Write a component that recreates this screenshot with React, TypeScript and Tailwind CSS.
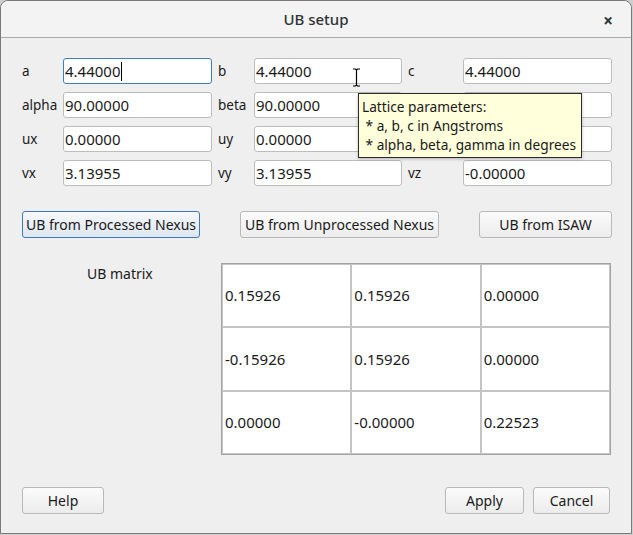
import React from 'react'

const fieldRows = [
  [
    ['a', '4.44000'],
    ['b', '4.44000'],
    ['c', '4.44000'],
  ],
  [
    ['alpha', '90.00000'],
    ['beta', '90.00000'],
    ['gamma', '90.00000'],
  ],
  [
    ['ux', '0.00000'],
    ['uy', '0.00000'],
    ['uz', '1.00000'],
  ],
  [
    ['vx', '3.13955'],
    ['vy', '3.13955'],
    ['vz', '-0.00000'],
  ],
]

const matrix = [
  ['0.15926', '0.15926', '0.00000'],
  ['-0.15926', '0.15926', '0.00000'],
  ['0.00000', '-0.00000', '0.22523'],
]

function Field({ value, focused }: { value: string; focused?: boolean }) {
  return (
    <div
      className={
        'h-[26px] flex items-center bg-white rounded-[3px] border pl-[1px] text-[15px] ' +
        (focused ? 'border-[#3c80c4]' : 'border-[#bcbcbc]')
      }
    >
      <span>{value}</span>
      {focused && <span className="w-px h-[19px] bg-black" />}
    </div>
  )
}

function Button({ label, className = '', primary }: { label: string; className?: string; primary?: boolean }) {
  return (
    <button
      className={
        'h-[27px] rounded-[3px] border flex items-center justify-center ' +
        (primary
          ? 'border-[#3b7bbd] bg-gradient-to-b from-[#f6f8fb] to-[#dfe6ee] '
          : 'border-[#b9b9b9] bg-gradient-to-b from-[#fbfbfb] to-[#ececec] ') +
        className
      }
    >
      {label}
    </button>
  )
}

export default function App() {
  return (
    <div
      className="w-[633px] h-[535px] bg-[#cfcfcf] text-[14px] text-[#1a1a1a] overflow-hidden"
      style={{ fontFamily: '"Noto Sans", sans-serif' }}
    >
      <div className="relative w-[632px] h-[534px] bg-[#efefef] border border-[#7a7a7a] rounded-t-[8px] flex flex-col">
        {/* title bar */}
        <div className="h-[37px] shrink-0 bg-[#f3f3f3] rounded-t-[8px] border-b border-[#a9a9a9] flex items-center justify-center relative">
          <span className="text-[15px] text-[#2e3436] font-medium">UB setup</span>
          <span className="absolute right-[18px] top-[7px] text-[17px] font-bold text-[#2e3436]">×</span>
        </div>

        <div className="pl-[21px] pt-[20px] flex flex-col">
          {/* lattice fields */}
          <div className="grid grid-cols-[41px_149px_42px_148px_61px_149px] gap-y-[8px]">
            {fieldRows.map((row, r) =>
              row.map(([label, value], c) => (
                <React.Fragment key={r + '-' + c}>
                  <div className={'flex items-center text-[13.5px] ' + (c > 0 ? 'pl-[6px]' : '')}>{label}</div>
                  <Field value={value} focused={r === 0 && c === 0} />
                </React.Fragment>
              ))
            )}
          </div>

          {/* UB buttons */}
          <div className="flex mt-[25px]">
            <Button label="UB from Processed Nexus" primary className="w-[178px]" />
            <Button label="UB from Unprocessed Nexus" className="w-[199px] ml-[40px]" />
            <Button label="UB from ISAW" className="w-[133px] ml-[40px]" />
          </div>

          {/* UB matrix */}
          <div className="flex mt-[25px]">
            <div className="w-[199px] pl-[65px]">UB matrix</div>
            <div className="w-[390px] h-[192px] border border-[#a3a3a3] bg-[#c4c4c4] grid grid-cols-3 grid-rows-3 gap-[2px] p-px">
              {matrix.flat().map((v, i) => (
                <div key={i} className="bg-white flex items-center pl-[2px] text-[15px]">
                  {v}
                </div>
              ))}
            </div>
          </div>
        </div>

        {/* bottom buttons */}
        <div className="mt-auto mb-[19px] pl-[21px] pr-[21px] flex">
          <Button label="Help" className="w-[82px]" />
          <div className="flex-1" />
          <Button label="Apply" className="w-[79px]" />
          <Button label="Cancel" className="w-[77px] ml-[9px]" />
        </div>

        {/* I-beam mouse cursor */}
        <svg className="absolute left-[351px] top-[67px]" width="9" height="19" viewBox="0 0 9 19">
          <path d="M1 1h2.5l1 1 1-1H8M4.5 2v15M1 18h2.5l1-1 1 1H8" fill="none" stroke="#000" strokeWidth="1.2" />
        </svg>

        {/* tooltip */}
        <div className="absolute left-[357px] top-[92px] w-[224px] h-[65px] bg-[#ffffdc] border border-[#2b2b2b] px-[3px] pt-[3px] leading-[19px] text-[13.7px] whitespace-pre shadow-[0_1px_3px_rgba(0,0,0,0.25)]">
          <div>Lattice parameters:</div>
          <div> * a, b, c in Angstroms</div>
          <div> * alpha, beta, gamma in degrees</div>
        </div>
      </div>
    </div>
  )
}
